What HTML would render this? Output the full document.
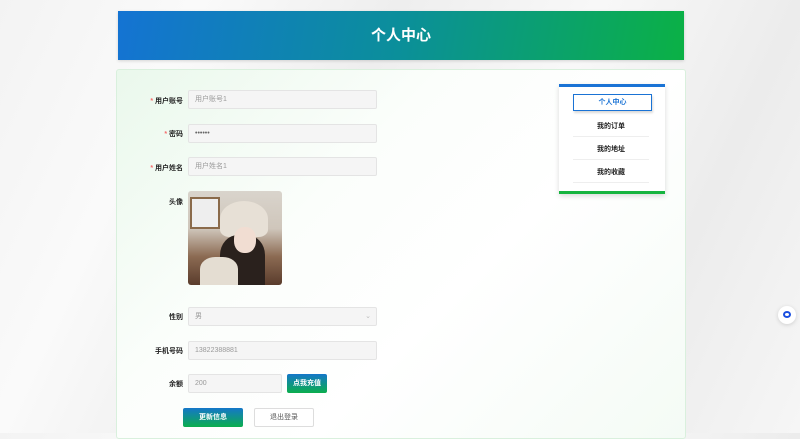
<!DOCTYPE html>
<html><head><meta charset="utf-8"><style>
*{box-sizing:border-box;margin:0;padding:0}
body{width:800px;height:433px;overflow:hidden;position:relative;font-family:"Liberation Sans","Noto Sans CJK SC",sans-serif;background:linear-gradient(115deg,#f3f3f3 0%,#fafafa 20%,#eeeeee 40%,#f8f8f8 60%,#ececec 80%,#f6f6f6 100%)}
.hdr{position:absolute;left:118px;top:11px;width:566px;height:49px;background:linear-gradient(100deg,#1473d3,#0b8f9a 50%,#0bb145);color:#fff;font-size:15px;font-weight:bold;text-align:center;line-height:49px;box-shadow:0 1px 3px rgba(0,0,0,.15)}
.main{position:absolute;left:116px;top:69px;width:570px;height:370px;background:linear-gradient(135deg,#eaf8ec 0%,#fbfefb 35%,#fff 60%,#f4fbf5 100%);border:1px solid #d9f0dd;border-radius:3px}
.lbl{position:absolute;font-size:7px;color:#222;font-weight:bold;text-align:right;width:80px;left:103px}
.lbl i{color:#f56c6c;font-style:normal}
.inp{position:absolute;left:188px;width:189px;height:19px;background:#f5f5f5;border:1px solid #e4e4e4;border-radius:2px;font-size:7px;color:#999;padding-left:6px;line-height:17px}
.btn{position:absolute;height:19px;font-size:7px;font-weight:bold;color:#fff;text-align:center;line-height:19px;border-radius:2px;background:linear-gradient(180deg,#1577c9,#0bae4d)}
.menu{position:absolute;left:559px;top:84px;width:106px;height:110px;background:#fff;border-top:3px solid #1a73d5;border-bottom:3px solid #16b43f;box-shadow:0 2px 5px rgba(0,0,0,.15)}
.mi{position:absolute;left:14px;width:76px;font-size:7px;color:#222;font-weight:bold;text-align:center;border-bottom:1px solid #eee;height:22px;line-height:24px}
</style></head><body>
<div class="hdr">个人中心</div>
<div class="main"></div>
<div class="lbl" style="top:96px"><i>* </i>用户账号</div>
<div class="inp" style="top:90px">用户账号1</div>
<div class="lbl" style="top:129px"><i>* </i>密码</div>
<div class="inp" style="top:124px;color:#666">••••••</div>
<div class="lbl" style="top:163px"><i>* </i>用户姓名</div>
<div class="inp" style="top:157px">用户姓名1</div>
<div class="lbl" style="top:197px">头像</div>
<div style="position:absolute;left:188px;top:191px;width:94px;height:94px;border-radius:3px;overflow:hidden;background:linear-gradient(180deg,#d9d4cc 0%,#cfc6bb 40%,#8b6a52 70%,#5a3c2c 100%)">
<div style="position:absolute;left:2px;top:6px;width:30px;height:32px;background:#eee;border:2px solid #8a6a4a"></div>
<div style="position:absolute;left:32px;top:10px;width:48px;height:36px;border-radius:50% 50% 20% 20%;background:#e7e0d6"></div>
<div style="position:absolute;left:32px;top:44px;width:45px;height:50px;border-radius:40% 40% 0 0;background:#2a211d"></div>
<div style="position:absolute;left:46px;top:36px;width:22px;height:26px;border-radius:45%;background:#f1ddd2"></div>
<div style="position:absolute;left:12px;top:66px;width:38px;height:30px;border-radius:40% 40% 0 0;background:#e4ddd2"></div>
</div>
<div class="lbl" style="top:312px">性别</div>
<div class="inp" style="top:307px">男<span style="position:absolute;right:5px;color:#bbb">⌄</span></div>
<div class="lbl" style="top:346px">手机号码</div>
<div class="inp" style="top:341px">13822388881</div>
<div class="lbl" style="top:379px">余额</div>
<div class="inp" style="top:374px;width:94px">200</div>
<div class="btn" style="left:287px;top:374px;width:40px">点我充值</div>
<div class="btn" style="left:183px;top:408px;width:60px">更新信息</div>
<div style="position:absolute;left:254px;top:408px;width:60px;height:19px;background:#fff;border:1px solid #ddd;border-radius:2px;font-size:7px;color:#555;text-align:center;line-height:17px">退出登录</div>
<div class="menu">
<div style="position:absolute;left:14px;top:7px;width:79px;height:17px;border:1px solid #1a73d5;font-size:7px;font-weight:bold;color:#1a73d5;text-align:center;line-height:15px;box-shadow:1px 2px 2px rgba(0,0,0,.15)">个人中心</div>
<div class="mi" style="top:28px">我的订单</div>
<div class="mi" style="top:51px">我的地址</div>
<div class="mi" style="top:74px">我的收藏</div>
</div>
<div style="position:absolute;left:778px;top:306px;width:18px;height:18px;border-radius:50%;background:#fff;box-shadow:0 1px 4px rgba(0,0,0,.15)"><div style="position:absolute;left:5px;top:5px;width:8px;height:7px;border:2px solid #1a4fe0;border-radius:50%"></div></div>
</body></html>
